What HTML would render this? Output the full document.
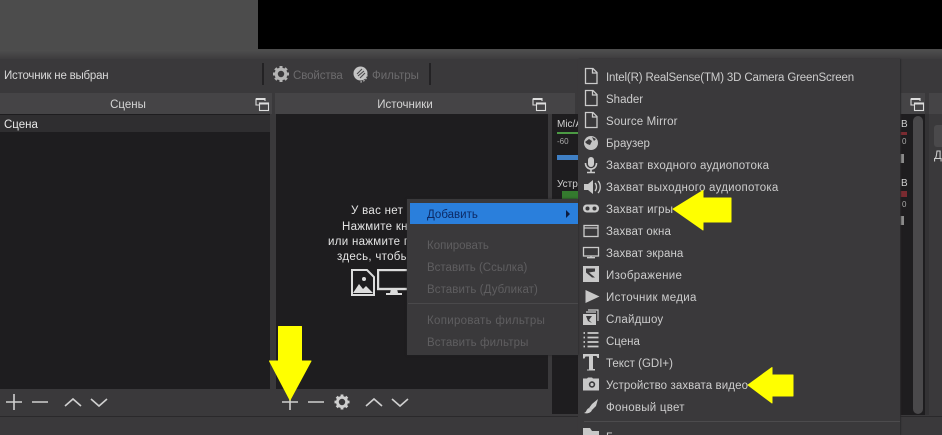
<!DOCTYPE html>
<html><head><meta charset="utf-8"><style>
html,body{margin:0;padding:0;background:#3a393b}
#r{position:relative;width:942px;height:435px;overflow:hidden;background:#3a393b;font:11.5px "Liberation Sans","Noto Sans CJK SC",sans-serif;color:#d2d2d2}
#r div,#r span,#r svg{position:absolute}
.t{white-space:nowrap;line-height:14px}
.m{left:606px;color:#cdcdcd;font-size:11.5px}
.d{left:427px;color:#5f5e60;font-size:11.5px}
.c{color:#e4e4e4;font-size:11.5px;letter-spacing:.3px}
</style></head><body><div id="r">
<div style="left:0;top:0;width:942px;height:50px;background:#4c4c4c"></div>
<div style="left:0;top:50px;width:942px;height:9px;background:linear-gradient(#4e4e4e,#3d3c3e)"></div>
<div style="left:258px;top:0;width:684px;height:49px;background:#000"></div>
<div style="left:0;top:59px;width:942px;height:34px;background:#3a393b"></div>
<span class="t" style="left:4px;top:69px;color:#d8d8d8;letter-spacing:-.22px">Источник не выбран</span>
<div style="left:262px;top:63px;width:2px;height:22px;background:#232224"></div>
<div style="left:429px;top:63px;width:2px;height:22px;background:#232224"></div>
<svg style="left:272px;top:65px" width="18" height="18" viewBox="0 0 18 18"><circle cx="9" cy="9" r="4.8" fill="none" stroke="#b4b4b4" stroke-width="3.2"/><path d="M9 1v3M9 14v3M1 9h3M14 9h3M3.3 3.3l2.2 2.2M12.5 12.5l2.2 2.2M14.7 3.3l-2.2 2.2M5.5 12.5l-2.2 2.2" stroke="#b4b4b4" stroke-width="3"/></svg>
<span class="t" style="left:293px;top:69px;color:#6c6b6d;letter-spacing:-.1px">Свойства</span>
<svg style="left:352px;top:65px" width="18" height="18" viewBox="0 0 18 18"><circle cx="8.5" cy="8.5" r="7" fill="#c4c4c4"/><path d="M5 9l5-5M6 11l6-5M8 13l5-5" stroke="#4a494b" stroke-width="1.1"/><path d="M15 10a7 7 0 0 1-7 7" fill="none" stroke="#bbb" stroke-width="1.2" stroke-dasharray="1.5 1.5"/></svg>
<span class="t" style="left:372px;top:69px;color:#6c6b6d">Фильтры</span>

<div style="left:0;top:93px;width:272px;height:21px;background:#454446"></div>
<div style="left:275px;top:93px;width:300px;height:21px;background:#454446"></div>
<span class="t" style="left:0;width:256px;text-align:center;top:98px;color:#d4d4d4">Сцены</span>
<span class="t" style="left:275px;width:260px;text-align:center;top:98px;color:#d4d4d4">Источники</span>
<svg style="left:255px;top:97px" width="15" height="15" viewBox="0 0 15 15"><path d="M1 1.5h9V4M1 1.5V8h3" fill="none" stroke="#ddd" stroke-width="1.1"/><rect x="1" y="1" width="9" height="2" fill="#ddd"/><rect x="4.5" y="6" width="9" height="7.5" fill="none" stroke="#ddd" stroke-width="1.1"/><rect x="4.5" y="5.5" width="9" height="2" fill="#ddd"/></svg>
<svg style="left:532px;top:97px" width="15" height="15" viewBox="0 0 15 15"><path d="M1 1.5h9V4M1 1.5V8h3" fill="none" stroke="#ddd" stroke-width="1.1"/><rect x="1" y="1" width="9" height="2" fill="#ddd"/><rect x="4.5" y="6" width="9" height="7.5" fill="none" stroke="#ddd" stroke-width="1.1"/><rect x="4.5" y="5.5" width="9" height="2" fill="#ddd"/></svg>

<div style="left:0;top:114px;width:270px;height:275px;background:#1e1d1f"></div>
<div style="left:0;top:115px;width:270px;height:17px;background:#2f2e30"></div>
<span class="t" style="left:4px;top:118px;color:#e8e8e8">Сцена</span>
<div style="left:276px;top:114px;width:272px;height:275px;background:#1e1d1f"></div>

<span class="t c" style="left:351px;top:204px">У вас нет источников.</span>
<span class="t c" style="left:342px;top:220px">Нажмите кнопку + ниже,</span>
<span class="t c" style="left:328px;top:235px">или нажмите правой кнопкой</span>
<span class="t c" style="left:337px;top:250px">здесь, чтобы добавить.</span>
<svg style="left:351px;top:269px" width="24" height="27" viewBox="0 0 24 27"><path d="M1 1h15l7 7v18H1z" fill="#1e1d1f" stroke="#dcdcdc" stroke-width="2"/><circle cx="13" cy="10" r="2" fill="#dcdcdc"/><path d="M2 24l6-9 4 5 3-3 7 7z" fill="#dcdcdc"/></svg>
<svg style="left:377px;top:269px" width="34" height="27" viewBox="0 0 34 27"><rect x="1" y="1" width="32" height="19" fill="none" stroke="#dcdcdc" stroke-width="2.4"/><path d="M14 20h6l1 4h4v2H9v-2h4z" fill="#dcdcdc"/></svg>

<div style="left:552px;top:114px;width:30px;height:300px;background:#1e1d1f"></div>
<span class="t" style="left:557px;top:118px;font-size:10px;color:#cfcfcf">Mic/A</span>
<div style="left:557px;top:132px;width:21px;height:2px;background:#4c9a44"></div>
<span class="t" style="left:557px;top:135px;font-size:8px;color:#a8a8a8">-60</span>
<div style="left:557px;top:155px;width:21px;height:5px;background:#3f7fc4"></div>
<span class="t" style="left:557px;top:178px;font-size:10px;color:#cfcfcf">Устр</span>
<div style="left:562px;top:191px;width:18px;height:8px;background:#347a2e"></div>

<div style="left:0;top:389px;width:270px;height:27px;background:#3a393b"></div>
<div style="left:276px;top:389px;width:272px;height:27px;background:#3a393b"></div>
<div style="left:0;top:416px;width:942px;height:1px;background:#2a292b"></div>
<svg style="left:0;top:389px" width="560" height="27" viewBox="0 0 560 27" fill="none" stroke="#cfcfcf" stroke-width="1.6"><path d="M14 5v16M6 13h16M32 13h16M65 17l8-7 8 7M91 10l8 7 8-7"/><path d="M282 13h16M290 5v16M308 13h16M366 17l8-7 8 7M392 10l8 7 8-7"/><circle cx="342" cy="13" r="4.6" stroke-width="2.8"/><path d="M342 5.5v3M342 17.5v3M334.500 13h3M346.500 13h3M336.700 7.700l2 2M345.300 16.300l2 2M347.300 7.700l-2 2M338.700 16.300l-2 2" stroke-width="2.8"/></svg>
<svg style="left:268px;top:326px" width="44" height="76" viewBox="0 0 44 76"><path d="M10.500 0.500h23v34.500h9.500L22 74 1.500 35h9z" fill="#ff0" stroke="#ff0" stroke-width="1" stroke-linejoin="round"/></svg>

<div style="left:900px;top:93px;width:25px;height:21px;background:#454446"></div>
<div style="left:929px;top:93px;width:13px;height:21px;background:#454446"></div>
<div style="left:900px;top:114px;width:25px;height:301px;background:#1e1d1f"></div>
<div style="left:913px;top:116px;width:10px;height:298px;background:#4a494b;border-radius:5px"></div>
<div style="left:925px;top:114px;width:4px;height:301px;background:#333234"></div>
<div style="left:934px;top:125px;width:8px;height:22px;background:#4a494b;border-radius:3px 0 0 3px"></div>
<span class="t" style="left:934px;top:149px;color:#cfcfcf">Д</span>
<svg style="left:910px;top:97px" width="15" height="15" viewBox="0 0 15 15"><path d="M1 1.500h9V4M1 1.500V8h3" fill="none" stroke="#ddd" stroke-width="1.100"/><rect x="1" y="1" width="9" height="2" fill="#ddd"/><rect x="4.500" y="6" width="9" height="7.500" fill="none" stroke="#ddd" stroke-width="1.100"/><rect x="4.500" y="5.500" width="9" height="2" fill="#ddd"/></svg>
<span class="t" style="left:901px;top:118px;font-size:10px;color:#cfcfcf">B</span>
<div style="left:900px;top:132px;width:7px;height:3px;background:#7a2a30"></div>
<span class="t" style="left:902px;top:135px;font-size:8px;color:#a8a8a8">0</span>
<span class="t" style="left:901px;top:177px;font-size:10px;color:#cfcfcf">B</span>
<div style="left:900px;top:191px;width:7px;height:6px;background:#7a2a30"></div>
<span class="t" style="left:902px;top:198px;font-size:8px;color:#a8a8a8">0</span>
<div style="left:900px;top:154px;width:4px;height:9px;background:#8a8a8a"></div>
<div style="left:900px;top:216px;width:4px;height:9px;background:#8a8a8a"></div>

<!-- large menu -->
<div style="left:578px;top:59px;width:322px;height:376px;background:#3a393b;box-shadow:1px 0 1px #2a292b"></div>
<div style="left:584px;top:421px;width:316px;height:1px;background:#4c4b4d"></div>

<span class="t m" style="top:71px;letter-spacing:-.16px">Intel(R) RealSense(TM) 3D Camera GreenScreen</span>
<span class="t m" style="top:93px">Shader</span>
<span class="t m" style="top:115px;letter-spacing:.15px">Source Mirror</span>
<span class="t m" style="top:137px">Браузер</span>
<span class="t m" style="top:159px;letter-spacing:.22px">Захват входного аудиопотока</span>
<span class="t m" style="top:181px;letter-spacing:.25px">Захват выходного аудиопотока</span>
<span class="t m" style="top:203px;letter-spacing:.2px">Захват игры</span>
<span class="t m" style="top:225px;letter-spacing:.1px">Захват окна</span>
<span class="t m" style="top:247px;letter-spacing:.1px">Захват экрана</span>
<span class="t m" style="top:269px;letter-spacing:.35px">Изображение</span>
<span class="t m" style="top:291px;letter-spacing:.35px">Источник медиа</span>
<span class="t m" style="top:313px;letter-spacing:.2px">Слайдшоу</span>
<span class="t m" style="top:335px">Сцена</span>
<span class="t m" style="top:357px">Текст (GDI+)</span>
<span class="t m" style="top:379px;letter-spacing:.1px">Устройство захвата видео</span>
<span class="t m" style="top:401px;letter-spacing:.25px">Фоновый цвет</span>
<span class="t m" style="top:431px">Г</span>

<svg style="left:580px;top:66px" width="24" height="369" viewBox="0 0 24 369" fill="none" stroke="#cbcbcb" stroke-width="1.300">
<path d="M5.500 2.500h7.500l4 4v11h-11.500zM12.500 2.500v4.500h4.500"/>
<path d="M5.500 24.500h7.500l4 4v11h-11.500zM12.500 24.500v4.500h4.500"/>
<path d="M5.500 46.500h7.500l4 4v11h-11.500zM12.500 46.500v4.500h4.500"/>
<circle cx="11" cy="77" r="7" fill="#c4c4c4" stroke="none"/><path d="M5 76l4-3 3 2-2 4-3-1zM12 71l4 2-2 2z" fill="#3a393b" stroke="none"/>
<g transform="translate(0,-1)"><rect x="8" y="92" width="6" height="10" rx="3" fill="#cbcbcb" stroke="none"/><path d="M5.500 98c0 8 11 8 11 0M11 104v3M7 107.500h8" stroke-width="1.600"/></g>
<g transform="translate(0,-1)"><path d="M4 119h4l5-4v14l-5-4H4z" fill="#c8c8c8" stroke="none"/><path d="M15 118c2 2 2 6 0 8M18 116c3 3 3 9 0 12"/></g>
<rect x="3" y="138.500" width="16" height="8" rx="3.700" fill="#cbcbcb" stroke="none"/><circle cx="7.500" cy="142.500" r="2" fill="#3a393b" stroke="none"/><circle cx="14.500" cy="142.500" r="2" fill="#3a393b" stroke="none"/>
<rect x="4" y="159.500" width="14" height="11"/><path d="M4 162h14" stroke-width="1.200"/>
<rect x="3.500" y="181.500" width="15" height="8.500"/><path d="M11 190v1.500M7 191.700h8" stroke-width="1.400"/>
<rect x="3" y="200" width="16" height="16" fill="#c8c8c8" stroke="none"/><path d="M6 202.500h9v3l-6 1 6 5h-3l-6-5z" fill="#3a393b" stroke="none"/>
<path d="M5.500 224l14 6.500-14 6.500z" fill="#c8c8c8" stroke="none"/>
<g transform="translate(0,-3)"><path d="M8 247h10v11M6 249h10" stroke-width="1.200"/><rect x="3" y="251" width="13" height="11" fill="#c8c8c8" stroke="none"/><path d="M6 253h6l-3 4 3 3-4-2z" fill="#3a393b" stroke="none"/></g>
<path d="M7.500 267h11M7.500 271.500h11M7.500 276h11M7.500 280.500h11" stroke-width="1.700"/><path d="M3.500 267h1.500M3.500 271.500h1.500M3.500 276h1.500M3.500 280.500h1.500" stroke-width="1.700"/>
<g transform="translate(0,-2.500)"><path d="M3 290.500h16v4h-1.500l-1-2h-3.500v13h2v1.500H7V306h2v-13H5.500l-1 2H3z" fill="#cbcbcb" stroke="none"/></g>
<g transform="translate(0,-2.500)"><path d="M3 315h4l1-1h4l1 1h6v12H3z" fill="#c8c8c8" stroke="none"/><circle cx="12" cy="321" r="3.200" fill="#3a393b" stroke="none"/><circle cx="12" cy="321" r="1.600" fill="#c8c8c8" stroke="none"/></g>
<g transform="translate(0,-3)"><path d="M18 336l-6 5-3 4 3 2 4-4z" fill="#cbcbcb" stroke="none"/><path d="M9 345c-3 1-2 4-5 5 3 1 7 0 8-3z" fill="#cbcbcb" stroke="none"/></g>
<path d="M3 362h7l2 3h7v8H3z" fill="#c8c8c8" stroke="none"/>
</svg>

<svg style="left:671px;top:190px" width="62" height="42" viewBox="0 0 62 42"><path d="M2 19L32 0.500v7.500h28v24H32v8z" fill="#ff0" stroke="#ff0" stroke-width="1" stroke-linejoin="round"/></svg>
<svg style="left:746px;top:366px" width="48" height="38" viewBox="0 0 48 38"><path d="M2 19L26 1.500v7.500h21v21H26v7z" fill="#ff0" stroke="#ff0" stroke-width="1" stroke-linejoin="round"/></svg>

<!-- context menu -->
<div style="left:407px;top:199px;width:171px;height:156px;background:#3a393b;box-shadow:0 0 2px #242325"></div>
<div style="left:410px;top:203px;width:168px;height:21px;background:#2a7fdc"></div>
<span class="t" style="left:427px;top:208px;color:#0c2a66">Добавить</span>
<div style="left:566px;top:210px;width:0;height:0;border-left:4px solid #0c1c40;border-top:4px solid transparent;border-bottom:4px solid transparent"></div>
<span class="t d" style="top:239px">Копировать</span>
<span class="t d" style="top:261px">Вставить (Ссылка)</span>
<span class="t d" style="top:283px;letter-spacing:.08px">Вставить (Дубликат)</span>
<div style="left:408px;top:303px;width:170px;height:1px;background:#4a494b"></div>
<span class="t d" style="top:314px;letter-spacing:.3px">Копировать фильтры</span>
<span class="t d" style="top:336px;letter-spacing:.12px">Вставить фильтры</span>
</div></body></html>
